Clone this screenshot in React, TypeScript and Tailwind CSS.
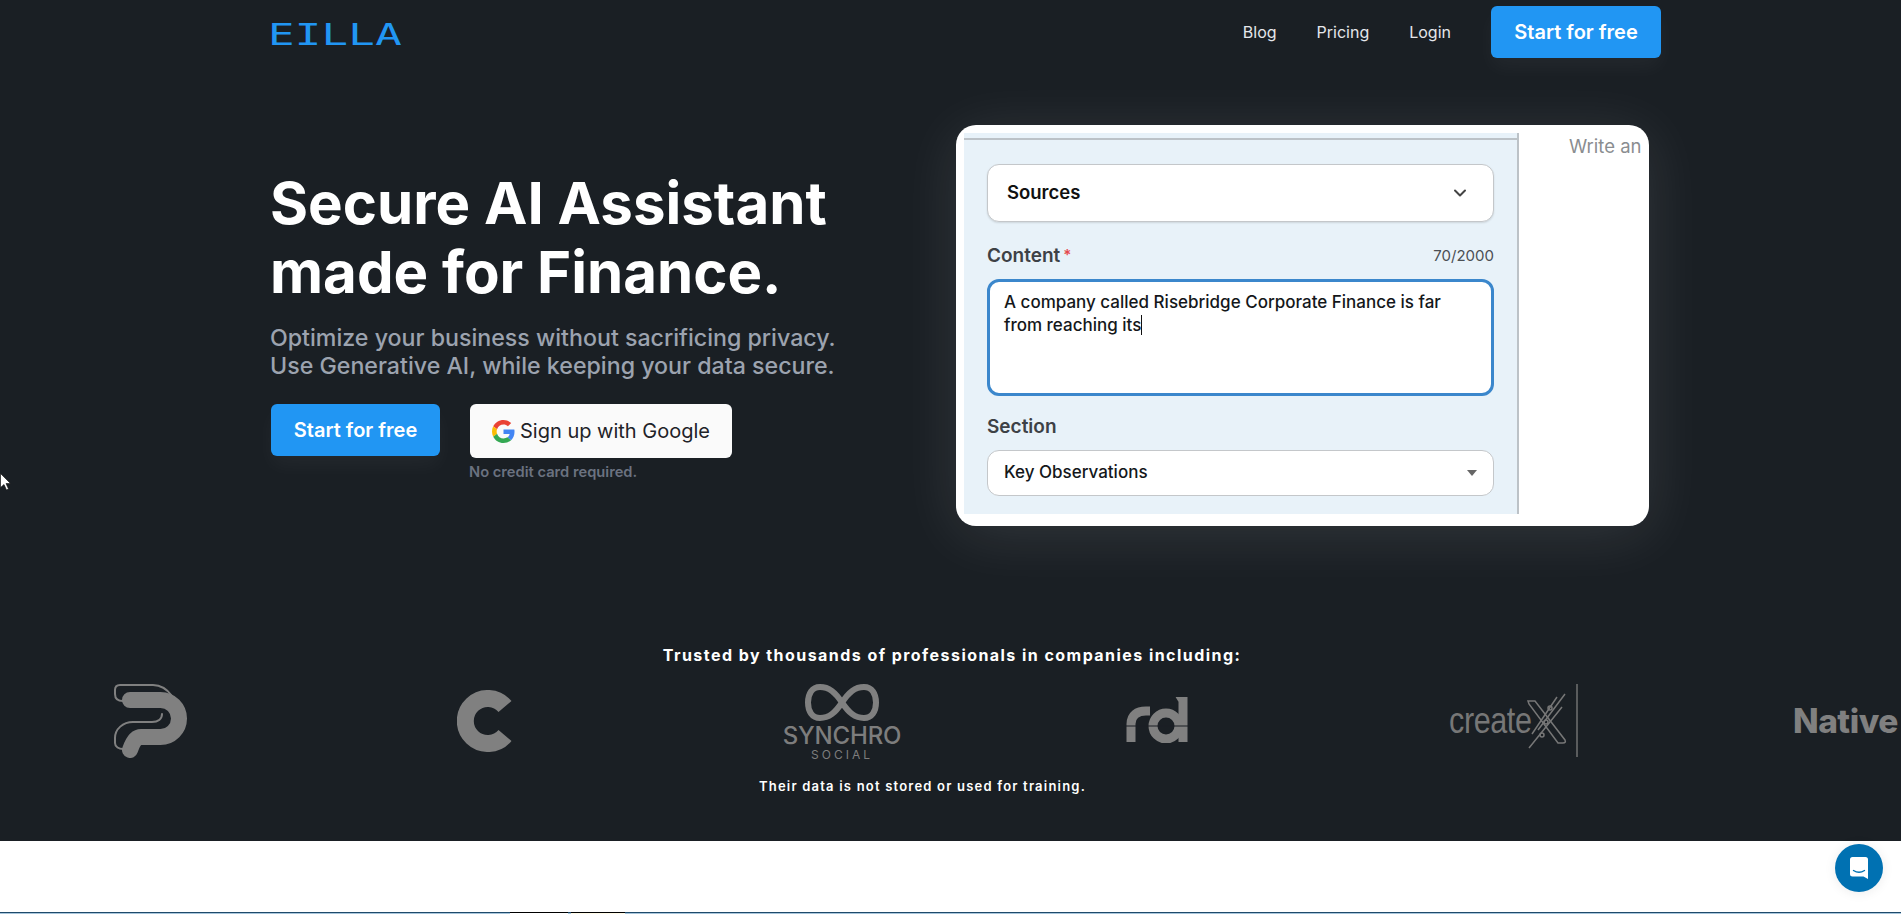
import { ChevronDown } from 'lucide-react'

const inter = "font-['Inter',sans-serif]"

function GoogleIcon() {
  return (
    <svg viewBox="0 0 48 48" className="w-[23px] h-[23px] shrink-0">
      <path fill="#EA4335" d="M24 9.5c3.5 0 6.7 1.2 9.2 3.6l6.9-6.9C35.9 2.4 30.5 0 24 0 14.6 0 6.5 5.4 2.6 13.2l8 6.2C12.5 13.7 17.8 9.5 24 9.5z" />
      <path fill="#4285F4" d="M47 24.5c0-1.6-.1-3.1-.4-4.5H24v9h12.9c-.6 3-2.2 5.500-4.700 7.200l7.700 6c4.500-4.200 7.100-10.300 7.100-17.700z" />
      <path fill="#FBBC05" d="M10.5 28.6c-.5-1.4-.8-3-.8-4.6s.3-3.2.8-4.6l-8-6.2C.9 16.4 0 20.1 0 24s.9 7.6 2.6 10.8l7.900-6.200z" />
      <path fill="#34A853" d="M24 48c6.500 0 11.900-2.100 15.900-5.800l-7.700-6c-2.200 1.400-4.900 2.300-8.200 2.300-6.200 0-11.500-4.200-13.400-9.900l-8 6.200C6.500 42.600 14.600 48 24 48z" />
    </svg>
  )
}

function PLogo() {
  return (
    <svg viewBox="0 0 75 74" className="w-[75px] h-[74px]" fill="none">
      <path d="M17 16 H47.5 A18.5 18.5 0 0 1 47.5 53 H28 C22 53 19 60 17 66" stroke="#808080" strokeWidth="16" strokeLinecap="round" />
      <path d="M10 17 C5 17 2 15 2 10 V6 C2 3 4 1 7 1 H40 C48 1 54 5 59 12 M49 30 C49 35 45 38 39 38 H20 C10 38 2 45 2 54 V59 C2 63 6 65 10 65" stroke="#808080" strokeWidth="2" strokeLinecap="round" />
    </svg>
  )
}

function CLogo() {
  return (
    <svg viewBox="0 0 56 62" className="w-[56px] h-[62px]" fill="none">
      <path d="M48 16.500 A22.500 22.500 0 1 0 48 45.500" stroke="#808080" strokeWidth="17" />
    </svg>
  )
}

function SynchroLogo() {
  return (
    <div className="w-[122px] flex flex-col items-center text-[#7d7d7d]">
      <svg viewBox="0 0 74 37" className="w-[74px] h-[37px]" fill="none">
        <path d="M37 18.500 C30 8 24 3 15 3 C7 3 3 10 3 18.500 C3 27 7 34 15 34 C24 34 30 29 37 18.500 C44 8 50 3 59 3 C67 3 71 10 71 18.500 C71 27 67 34 59 34 C50 34 44 29 37 18.500 Z" stroke="#808080" strokeWidth="6" />
      </svg>
      <span className="text-[24px] leading-[25px] font-medium tracking-[-0.2px] mt-[2px]">SYNCHRO</span>
      <span className="text-[12px] leading-[13px] tracking-[3px]">SOCIAL</span>
    </div>
  )
}

function RdLogo() {
  return (
    <svg viewBox="0 0 62 46" className="w-[62px] h-[46px]" fill="none">
      <path d="M5 45 V27 C5 18 11 14 20 14 H24" stroke="#808080" strokeWidth="9" />
      <circle cx="40" cy="29" r="13" stroke="#808080" strokeWidth="9" />
      <path d="M57 45 V1 L52 4" stroke="#808080" strokeWidth="9" />
      <path d="M0 29 H62" stroke="#1a1f24" strokeWidth="1" />
    </svg>
  )
}

function CreateXLogo() {
  return (
    <div className="w-[129px] h-[74px] flex items-center">
      <span className="w-[79px] shrink-0 origin-left scale-x-[0.85] font-['Liberation_Sans',sans-serif] text-[36px] font-light text-[#777777] tracking-[-0.5px]">create</span>
      <svg viewBox="0 0 50 74" className="w-[50px] h-[74px] shrink-0 overflow-visible" fill="none" stroke="#777777" strokeWidth="1.500">
        <path d="M0 17 H7 L37 56 C38 58 37 59 35 59 H30 L1 20 Z" />
        <path d="M1 64 L34 23 M4 50 L29 13 M10 46 L37 10" />
        <circle cx="22" cy="24" r="2" />
        <circle cx="18" cy="38" r="2" />
        <circle cx="14" cy="51" r="2" />
        <path d="M49 0 V73" strokeWidth="1.400" />
      </svg>
    </div>
  )
}

export default function App() {
  return (
    <div className={`relative h-screen overflow-hidden bg-white ${inter}`}>
      <section className="h-[841px] bg-[#1a1f24] overflow-hidden">
        {/* Nav */}
        <nav className="flex items-center pl-[268px] pr-[240px] pt-[6px]">
          <span className="mt-[4px] inline-block origin-left scale-x-[1.42] font-['DejaVu_Sans_Mono',monospace] font-normal text-[31px] leading-[48px] tracking-[0.2px] text-[#2196f3]">
            EILLA
          </span>
          <div className="ml-auto flex items-center text-[16px] text-[#e5e7eb]">
            <a className="mr-[40px]">Blog</a>
            <a className="mr-[40px]">Pricing</a>
            <a className="mr-[40px]">Login</a>
            <button className="w-[170px] h-[52px] rounded-[6px] bg-[#2196f3] text-white text-[20px] font-semibold shadow-[0_10px_20px_rgba(255,255,255,0.04)]">
              Start for free
            </button>
          </div>
        </nav>

        {/* Hero */}
        <div className="flex pl-[271px] mt-[67px]">
          <div className="w-[685px] pt-[44px]">
            <h1 className="-ml-[1px] text-[58.2px] leading-[69px] font-bold text-white">
              Secure AI Assistant
              <br />
              made for Finance.
            </h1>
            <p className="-ml-[1px] mt-[17px] text-[23.2px] leading-[28px] font-medium text-[#9ca3af]">
              Optimize your business without sacrificing privacy.
              <br />
              Use Generative AI, while keeping your data secure.
            </p>
            <div className="mt-[24px] flex items-start">
              <button className="w-[169px] h-[52px] rounded-[6px] bg-[#2196f3] text-white text-[20px] font-semibold shadow-[0_10px_20px_rgba(255,255,255,0.04)]">
                Start for free
              </button>
              <div className="ml-[30px]">
                <button className="w-[262px] h-[54px] rounded-[6px] bg-[#fafafa] flex items-center justify-center gap-[5px] text-[#1f2328] text-[20px]">
                  <GoogleIcon />
                  Sign up with Google
                </button>
                <p className="-ml-[1px] mt-[4px] text-[14.7px] leading-[20px] font-semibold text-[#6b7280]">
                  No credit card required.
                </p>
              </div>
            </div>
          </div>

          {/* Card */}
          <div className="w-[693px] h-[401px] rounded-[20px] bg-white pl-[8px] pt-[8px] pb-[12px] flex shadow-[0_8px_60px_rgba(255,255,255,0.11)] overflow-hidden">
            <div className="w-[555px] h-full bg-[#e8f2f9] border-r-2 border-[#bcc2c7] px-[23px] overflow-hidden">
              <div className="-mx-[23px] h-[7px] border-b-2 border-[#bcc2c7]" />
              <div className="mt-[24px] h-[58px] rounded-[12px] bg-white border border-[#c4c7ca] flex items-center justify-between pl-[19px] pr-[23px] shadow-[0_1px_2px_rgba(0,0,0,0.12)]">
                <span className="text-[18.5px] font-semibold text-[#111111]">Sources</span>
                <ChevronDown className="w-[20px] h-[20px] text-[#444444]" strokeWidth={2.4} />
              </div>
              <div className="mt-[22px] flex items-center justify-between h-[24px]">
                <span className="text-[19px] font-semibold text-[#3d4146]">
                  Content<span className="ml-[3px] text-[15px] text-[#e5484d] align-[2px]">*</span>
                </span>
                <span className="text-[15px] text-[#4b4f54]">70/2000</span>
              </div>
              <div className="mt-[11px] h-[117px] rounded-[12px] bg-white border-[3px] border-[#3b87cc] pl-[14px] pr-[14px] pt-[9px] text-[17px] font-medium leading-[23px] text-[#14171a] whitespace-nowrap">
                A company called Risebridge Corporate Finance is far
                <br />
                from reaching its<span className="inline-block w-[1px] h-[20px] bg-[#111111] align-[-4px]" />
              </div>
              <div className="mt-[19px] h-[24px] text-[19px] font-semibold leading-[24px] text-[#3d4146]">Section</div>
              <div className="mt-[11px] h-[46px] rounded-[12px] bg-white border border-[#c4c7ca] flex items-center justify-between pl-[16px] pr-[16px]">
                <span className="text-[17px] font-medium text-[#14171a]">Key Observations</span>
                <span className="w-0 h-0 border-x-[5px] border-x-transparent border-t-[6px] border-t-[#666666]" />
              </div>
            </div>
            <span className="ml-[50px] mt-[1px] text-[18.5px] leading-[24px] text-[#8a8d90] whitespace-nowrap">
              Write an
            </span>
          </div>
        </div>

        {/* Trusted by */}
        <p className="mt-[117px] pl-[3px] text-center text-[16px] leading-[24px] font-bold tracking-[1.45px] text-white">
          Trusted by thousands of professionals in companies including:
        </p>
        <div className="mt-[17px] h-[76px] flex items-start whitespace-nowrap">
          <div className="ml-[113px]"><PLogo /></div>
          <div className="ml-[269px] mt-[6px]"><CLogo /></div>
          <div className="ml-[268px]"><SynchroLogo /></div>
          <div className="ml-[223px] mt-[13px]"><RdLogo /></div>
          <div className="ml-[261px]"><CreateXLogo /></div>
          <span className="ml-[215px] mt-[17px] text-[33.5px] leading-[40px] font-extrabold tracking-[-0.5px] text-[#808080]">Native</span>
        </div>
        <p className="mt-[16px] pr-[56px] text-center text-[13px] leading-[20px] font-semibold tracking-[1.2px] text-white">
          Their data is not stored or used for training.
        </p>
      </section>

      <section className="h-[71px] bg-white" />
      <div className="h-[2px] border-t border-[#1f4a6b] bg-[#a8c6dc] flex pl-[510px]">
        <div className="w-[58px] h-[2px] -mt-px border-t border-black bg-white" />
        <div className="ml-[3px] w-[54px] h-[2px] -mt-px border-t border-black bg-[#fffbe8]" />
      </div>

      {/* Chat launcher */}
      <button className="absolute right-[18px] bottom-[22px] w-[48px] h-[48px] rounded-full bg-[#0071b2] flex items-center justify-center shadow-[0_1px_12px_rgba(0,0,0,0.08)]">
        <svg viewBox="0 0 24 24" className="w-[24px] h-[24px]">
          <path fill="#ffffff" d="M3 3.500A2.500 2.500 0 0 1 5.500 1h13A2.500 2.500 0 0 1 21 3.500V23l-4.500-2.500H5.500A2.500 2.500 0 0 1 3 18z" />
          <path d="M6.500 14.500c3.200 2 7.800 2 11 0" fill="none" stroke="#0071b2" strokeWidth="1.400" strokeLinecap="round" />
        </svg>
      </button>

      {/* Mouse pointer */}
      <svg viewBox="0 0 12 18" className="absolute left-0 top-[473px] w-[12px] h-[18px]">
        <path d="M0.500 0.500V14.500L4 11.500L6.500 17L8.500 16L6 10.500H10.500Z" fill="#ffffff" stroke="#111111" strokeWidth="0.600" />
      </svg>
    </div>
  )
}
